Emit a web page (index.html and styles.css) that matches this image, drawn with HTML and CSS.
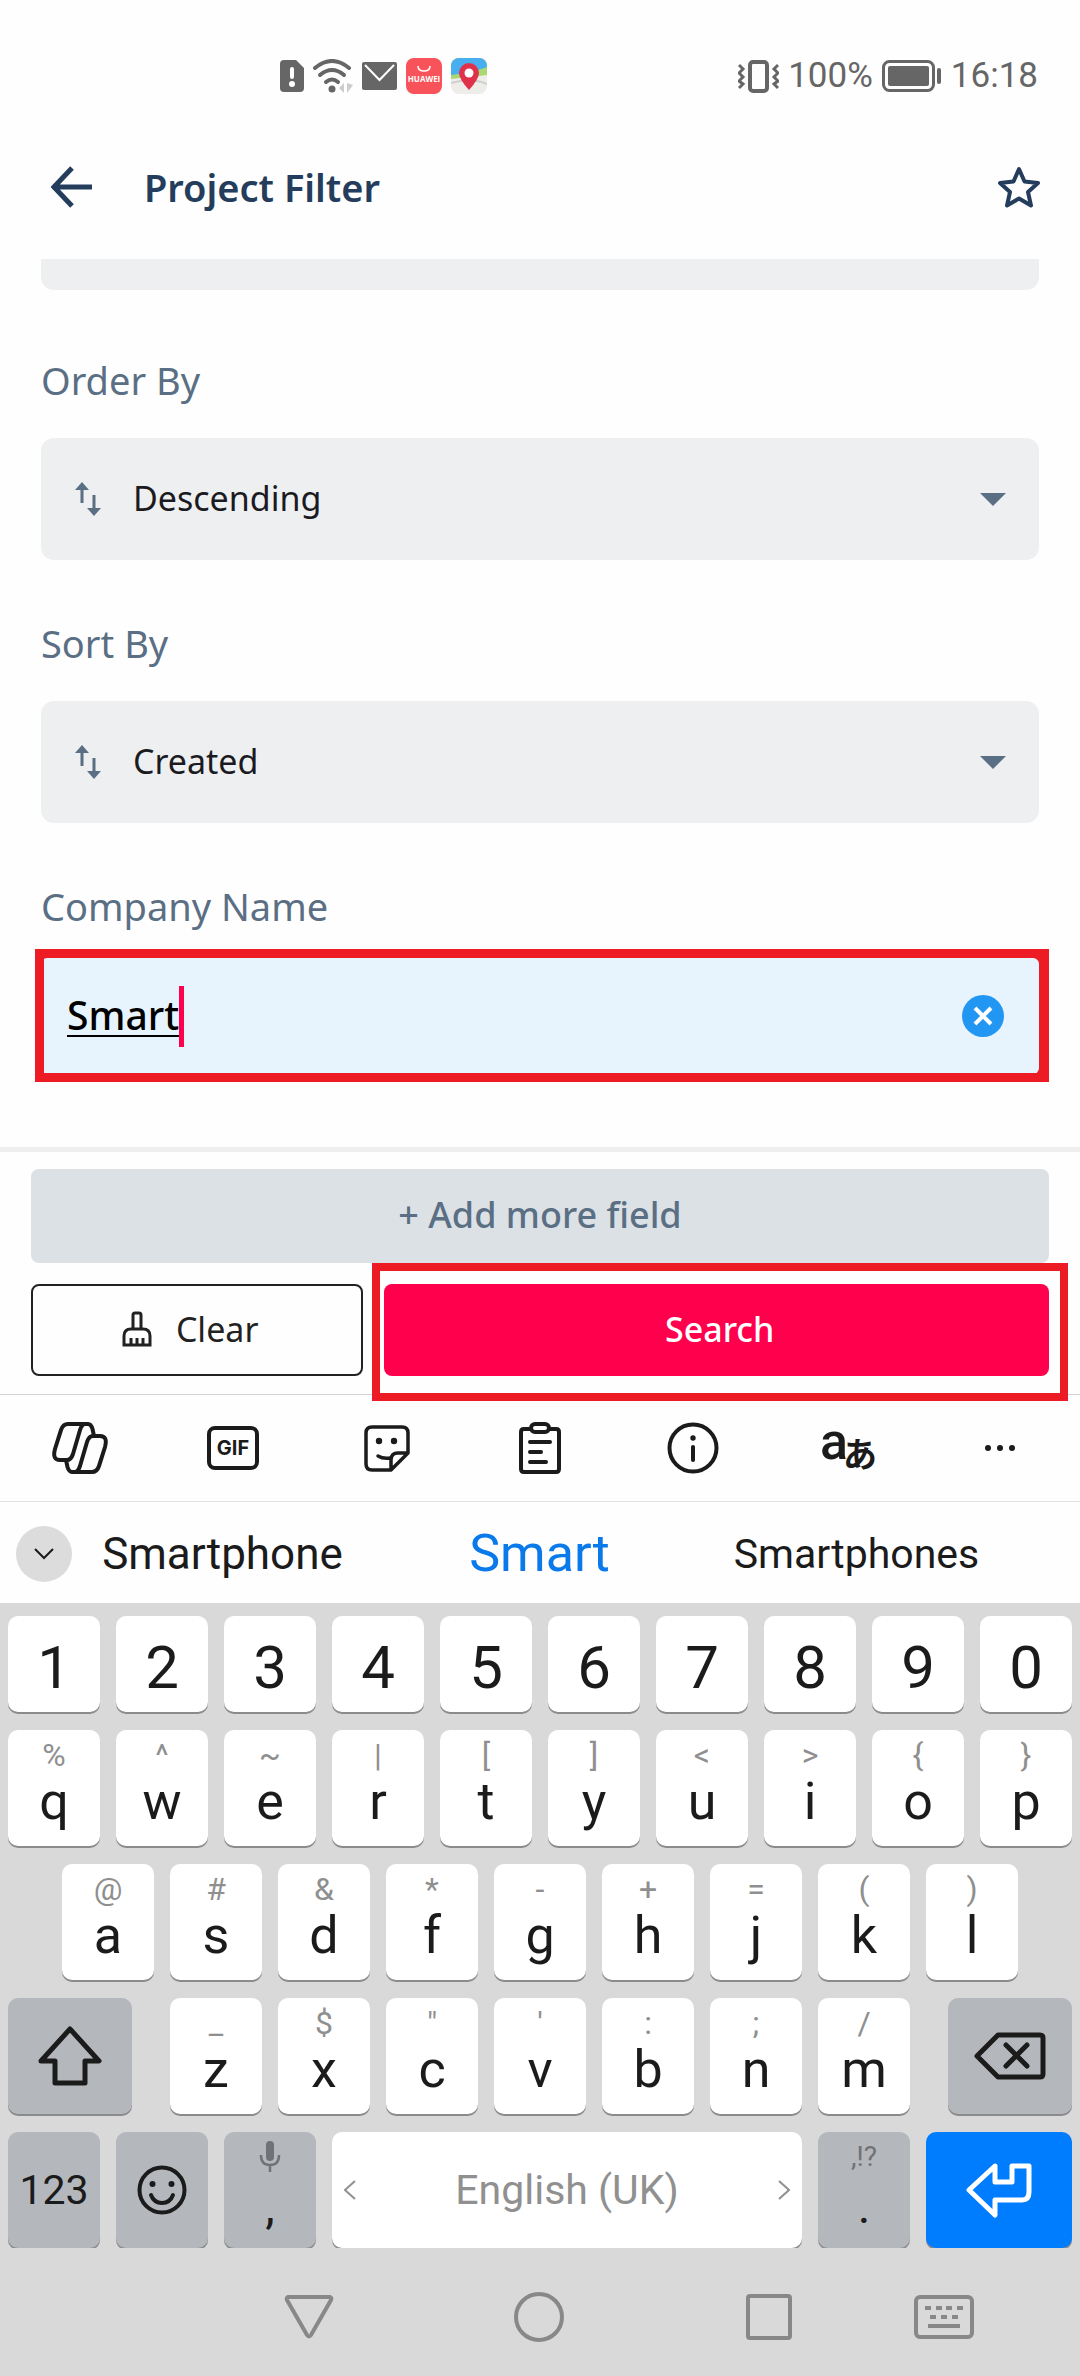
FILE: index.html
```html
<!DOCTYPE html>
<html lang="en">
<head>
<meta charset="utf-8">
<meta name="viewport" content="width=device-width, initial-scale=1">
<title>Project Filter</title>
<link rel="stylesheet" href="styles.css">
</head>
<body>
<div class="status">
  <div class="status-left">
    <svg width="24" height="32" viewBox="0 0 24 32"><path d="M4 0H16L24 8V28Q24 32 20 32H4Q0 32 0 28V4Q0 0 4 0Z" fill="#666"/><path d="M12 9V17" stroke="#fff" stroke-width="4" stroke-linecap="round"/><circle cx="12" cy="24" r="3" fill="#fff"/></svg>
    <svg width="40" height="34" viewBox="0 0 40 34"><g fill="none" stroke="#666" stroke-width="4" stroke-linecap="round"><path d="M2 9Q19 -5 36 9"/><path d="M7 16Q19 6 31 16"/><path d="M13 23Q19 18 25 23"/></g><circle cx="19" cy="30" r="3.500" fill="#666"/><path d="M31 24V34L26 29ZM34 24L40 26L34 34Z" fill="#ccc"/></svg>
    <svg width="35" height="28" viewBox="0 0 35 28"><rect width="35" height="28" rx="2" fill="#666"/><path d="M3 3L17.500 18L32 3" fill="none" stroke="#fff" stroke-width="2"/></svg>
    <svg width="36" height="36" viewBox="0 0 36 36"><rect width="36" height="36" rx="8" fill="#f8525a"/><path d="M12 8Q12 13 18 13Q24 13 24 8" fill="none" stroke="#fff" stroke-width="1.500"/><text x="18" y="24" text-anchor="middle" class="brand">HUAWEI</text></svg>
    <svg width="36" height="36" viewBox="0 0 36 36"><defs><clipPath id="m"><rect width="36" height="36" rx="8"/></clipPath></defs><g clip-path="url(#m)"><rect width="36" height="36" fill="#eeedea"/><path d="M0 0H36V17L0 21Z" fill="#a9d873"/><path d="M0 0H36V9Q24 14 0 17Z" fill="#48aef0"/><path d="M0 25Q20 19 36 26" stroke="#cfcfcf" fill="none" stroke-width="2"/></g><path d="M18 32Q8 21 8 15A10 10 0 0 1 28 15Q28 21 18 32Z" fill="#e0314a"/><circle cx="18" cy="15" r="4.500" fill="#fff"/></svg>
  </div>
  <div class="status-right">
    <svg width="41" height="33" viewBox="0 0 41 33" fill="none" stroke="#666" stroke-width="3"><rect x="12" y="2" width="17" height="29" rx="3" stroke-width="4"/><path d="M1 5L5 9L1 13L5 17L1 21L5 24L1 28M40 5L36 9L40 13L36 17L40 21L36 24L40 28"/></svg>
    <span>100%</span>
    <svg width="60" height="32" viewBox="0 0 60 32"><rect x="1.500" y="1.500" width="50" height="29" rx="6" fill="none" stroke="#666" stroke-width="3"/><rect x="6" y="6" width="41" height="20" rx="2" fill="#666"/><path d="M57 10V22" stroke="#666" stroke-width="4" stroke-linecap="round"/></svg>
    <span>16:18</span>
  </div>
</div>
<header class="header">
  <button class="bare" aria-label="Back"><svg width="42" height="42" viewBox="0 0 42 42" fill="none" stroke="#243d5c" stroke-width="5"><path d="M21 2L3 21L21 40M3 21H41"/></svg></button>
  <h1>Project Filter</h1>
  <button class="bare" aria-label="Favourite"><svg width="46" height="44" viewBox="0 0 46 44"><path d="M23 4L28.500 16.500L42 18L32 27L35 40.500L23 33.500L11 40.500L14 27L4 18L17.500 16.500Z" fill="none" stroke="#243d5c" stroke-width="4" stroke-linejoin="round"/></svg></button>
</header>
<main class="form">
  <div class="cut"></div>
  <div class="group">
    <label for="order">Order By</label>
    <div class="pick">
      <svg class="sort" width="28" height="34" viewBox="0 0 28 34"><path d="M8 0L15 8H1ZM6.500 7H9.500V21H6.500ZM18.500 13H21.500V27H18.500ZM20 34L13 26H27Z" fill="#5a6f84"/></svg>
      <select id="order"><option>Descending</option></select>
      <svg width="26" height="13" viewBox="0 0 26 13"><path d="M0 0H26L13 13Z" fill="#5a6f84"/></svg>
    </div>
  </div>
  <div class="group">
    <label for="sort">Sort By</label>
    <div class="pick">
      <svg class="sort" width="28" height="34" viewBox="0 0 28 34"><path d="M8 0L15 8H1ZM6.500 7H9.500V21H6.500ZM18.500 13H21.500V27H18.500ZM20 34L13 26H27Z" fill="#5a6f84"/></svg>
      <select id="sort"><option>Created</option></select>
      <svg width="26" height="13" viewBox="0 0 26 13"><path d="M0 0H26L13 13Z" fill="#5a6f84"/></svg>
    </div>
  </div>
  <div class="group company">
    <label for="company">Company Name</label>
    <div class="entry marked">
      <input id="company" type="text" value="Smart" size="5">
      <span class="caret"></span>
      <button class="bare end" aria-label="Clear text"><svg width="42" height="42" viewBox="0 0 42 42"><circle cx="21" cy="21" r="21" fill="#2196f3"/><path d="M13 13L29 29M29 13L13 29" stroke="#fff" stroke-width="4"/></svg></button>
    </div>
  </div>
</main>
<footer class="actions">
  <button class="add">+ Add more field</button>
  <div class="pair">
    <button class="clear"><svg width="30" height="36" viewBox="0 0 30 36" fill="none" stroke="#222" stroke-width="3"><path d="M11 17V4Q11 2 13 2H17Q19 2 19 4V17M2 34V25Q2 18 9 18H21Q28 18 28 25V34ZM9 34V27M15 34V27M21 34V27"/></svg>Clear</button>
    <div class="search-wrap marked"><button class="search">Search</button></div>
  </div>
</footer>
<section class="keyboard" aria-label="Keyboard">
  <div class="tools">
    <button class="bare" aria-label="Copilot"><svg width="56" height="52" viewBox="0 0 56 52" fill="none" stroke="#1b1b1b" stroke-width="4" stroke-linejoin="round"><path d="M33 2H16Q11 2 9 8L3 27Q0 38 8 38H15Q19 38 21 32L28 8Q30 2 33 2H36Q39 2 40.500 7L42 14"/><path transform="rotate(180 28 26)" d="M33 2H16Q11 2 9 8L3 27Q0 38 8 38H15Q19 38 21 32L28 8Q30 2 33 2H36Q39 2 40.500 7L42 14"/></svg></button>
    <button class="bare" aria-label="GIF"><svg width="52" height="44" viewBox="0 0 52 44"><rect x="2" y="2" width="48" height="40" rx="6" fill="none" stroke="#1b1b1b" stroke-width="4"/><text x="26" y="29" text-anchor="middle" class="gif">GIF</text></svg></button>
    <button class="bare" aria-label="Stickers"><svg width="46" height="47" viewBox="0 0 46 47" fill="none" stroke="#1b1b1b" stroke-width="3.500" stroke-linejoin="round" stroke-linecap="round"><path d="M8 2H38Q44 2 44 8V28L27 45H8Q2 45 2 39V8Q2 2 8 2ZM27 45V35Q27 28 34 28H44M14 31Q19 34 26 33"/><g fill="#1b1b1b" stroke="none"><circle cx="15" cy="16" r="3.200"/><circle cx="30" cy="16" r="3.200"/></g></svg></button>
    <button class="bare" aria-label="Clipboard"><svg width="42" height="52" viewBox="0 0 42 52" fill="none" stroke="#1b1b1b" stroke-width="4" stroke-linecap="round"><path d="M12 7H5Q2 7 2 10V47Q2 50 5 50H37Q40 50 40 47V10Q40 7 37 7H30"/><rect x="12" y="2" width="18" height="8" rx="4"/><path d="M11 20H31M11 30H22M11 40H27"/></svg></button>
    <button class="bare" aria-label="Info"><svg width="52" height="52" viewBox="0 0 52 52"><circle cx="26" cy="26" r="23.500" fill="none" stroke="#1b1b1b" stroke-width="4"/><path d="M26 25V38" stroke="#1b1b1b" stroke-width="4" stroke-linecap="round"/><circle cx="26" cy="16" r="2.700" fill="#1b1b1b"/></svg></button>
    <button class="bare" aria-label="Language"><svg width="66" height="76" viewBox="0 0 66 76"><text x="6" y="49" class="lang-a">a</text><text x="29" y="57" class="lang-b">あ</text></svg></button>
    <button class="bare" aria-label="More"><svg width="32" height="8" viewBox="0 0 32 8" fill="#1b1b1b"><circle cx="4" cy="4" r="3"/><circle cx="16" cy="4" r="3"/><circle cx="28" cy="4" r="3"/></svg></button>
  </div>
  <div class="suggest">
    <button class="fold" aria-label="Collapse"><svg width="20" height="12" viewBox="0 0 20 12"><path d="M1 1L10 10L19 1" fill="none" stroke="#1b1b1b" stroke-width="2"/></svg></button>
    <button>Smartphone</button><button class="best">Smart</button><button class="less">Smartphones</button>
  </div>
  <div class="keys">
    <div class="row digits"><button>1</button><button>2</button><button>3</button><button>4</button><button>5</button><button>6</button><button>7</button><button>8</button><button>9</button><button>0</button></div>
    <div class="row"><button><small>%</small>q</button><button><small>^</small>w</button><button><small>~</small>e</button><button><small>|</small>r</button><button><small>[</small>t</button><button><small>]</small>y</button><button><small>&lt;</small>u</button><button><small>&gt;</small>i</button><button><small>{</small>o</button><button><small>}</small>p</button></div>
    <div class="row inset"><button><small>@</small>a</button><button><small>#</small>s</button><button><small>&amp;</small>d</button><button><small>*</small>f</button><button><small>-</small>g</button><button><small>+</small>h</button><button><small>=</small>j</button><button><small>(</small>k</button><button><small>)</small>l</button></div>
    <div class="row shifted">
      <button class="fn icon" aria-label="Shift"><svg width="64" height="60" viewBox="0 0 64 60"><path d="M32 3L61 35H47V57H17V35H3Z" fill="none" stroke="#1b1b1b" stroke-width="5" stroke-linejoin="round"/></svg></button>
      <div class="row letters"><button><small>_</small>z</button><button><small>$</small>x</button><button><small>"</small>c</button><button><small>'</small>v</button><button><small>:</small>b</button><button><small>;</small>n</button><button><small>/</small>m</button></div>
      <button class="fn icon" aria-label="Backspace"><svg width="72" height="48" viewBox="0 0 72 48" fill="none" stroke="#1b1b1b" stroke-width="5" stroke-linecap="round" stroke-linejoin="round"><path d="M24 3H66Q69 3 69 6V42Q69 45 66 45H24L3 24ZM32 13L53 34M53 13L32 34"/></svg></button>
    </div>
    <div class="row bottom">
      <button class="fn icon num">123</button>
      <button class="fn icon" aria-label="Emoji"><svg width="50" height="50" viewBox="0 0 50 50"><circle cx="25" cy="25" r="22.500" fill="none" stroke="#1b1b1b" stroke-width="4"/><circle cx="15.500" cy="19" r="3" fill="#1b1b1b"/><circle cx="34.500" cy="19" r="3" fill="#1b1b1b"/><path d="M14 30Q17 38 25 38Q33 38 36 30" fill="none" stroke="#1b1b1b" stroke-width="4" stroke-linecap="round"/></svg></button>
      <button class="fn punct"><small><svg width="22" height="32" viewBox="0 0 22 32"><rect x="7" y="0" width="8" height="20" rx="4" fill="#707276"/><path d="M2 14Q2 24 11 24Q20 24 20 14M11 24V31" fill="none" stroke="#707276" stroke-width="2.500"/></svg></small>,</button>
      <button class="icon space"><svg width="12" height="20" viewBox="0 0 12 20"><path d="M11 1L1 10L11 19" fill="none" stroke="#909090" stroke-width="2"/></svg>English (UK)<svg width="12" height="20" viewBox="0 0 12 20"><path d="M1 1L11 10L1 19" fill="none" stroke="#909090" stroke-width="2"/></svg></button>
      <button class="fn punct"><small>,!?</small>.</button>
      <button class="icon enter" aria-label="Enter"><svg width="68" height="56" viewBox="0 0 68 56"><path d="M30 4L4 28L30 53V38H57Q64 38 64 30V4H47V20H30Z" fill="none" stroke="#fff" stroke-width="5" stroke-linejoin="round"/></svg></button>
    </div>
  </div>
</section>
<nav class="nav">
  <button class="bare" aria-label="Back"><svg width="50" height="46" viewBox="0 0 50 46"><path d="M4 3H46Q48 4 47 6L27 41Q25 44 23 41L3 6Q2 4 4 3Z" fill="none" stroke="#888" stroke-width="4"/></svg></button>
  <button class="bare" aria-label="Home"><svg width="50" height="50" viewBox="0 0 50 50"><circle cx="25" cy="25" r="23" fill="none" stroke="#888" stroke-width="4"/></svg></button>
  <button class="bare" aria-label="Recent"><svg width="46" height="46" viewBox="0 0 46 46"><rect x="2" y="2" width="42" height="42" rx="2" fill="none" stroke="#888" stroke-width="4"/></svg></button>
  <button class="bare" aria-label="Switch keyboard"><svg width="60" height="44" viewBox="0 0 60 44"><rect x="2" y="2" width="56" height="40" rx="4" fill="none" stroke="#888" stroke-width="4"/><path d="M11 13H17M22 13H28M32 13H38M43 13H49M16 22H22M27 22H33M38 22H44M14 31H46" stroke="#888" stroke-width="4"/></svg></button>
</nav>
</body>
</html>
```
FILE: styles.css
```css
* { box-sizing: border-box; }
body { margin: 0; min-height: 100vh; display: flex; flex-direction: column; background: #fefefe; font-family: "Noto Sans", sans-serif; }
svg { display: block; flex: none; }
button, input, select { font: inherit; color: inherit; border: 0; margin: 0; padding: 0; background: none; }
.bare { display: flex; align-items: center; justify-content: center; }

.status { height: 150px; padding: 2px 42px 0 280px; display: flex; align-items: center; justify-content: space-between; font: 400 35px/40px Roboto, sans-serif; color: #666; }
.status-left { display: flex; align-items: center; gap: 9px; }
.status-right { display: flex; align-items: center; gap: 9px; }
.brand { font: 700 8px "Open Sans", sans-serif; fill: #fff; }

.header { height: 74px; margin-bottom: 35px; padding: 0 38px 0 51px; display: flex; align-items: center; color: #243d5c; }
.header h1 { flex: 1; margin: 0 0 0 51px; font-size: 38px; line-height: 48px; font-weight: 600; }

.form { padding: 0 41px 73px; border-bottom: 5px solid #eee; display: flex; flex-direction: column; gap: 59px; }
.cut { height: 31px; margin-bottom: 7px; border-radius: 0 0 13px 13px; background: #eeeff1; }
.group { display: flex; flex-direction: column; gap: 34px; }
.company { gap: 28px; }
.group label { font-size: 38px; line-height: 48px; color: #5a6f84; }
.pick { height: 122px; padding: 0 33px; border-radius: 13px; background: #eeeff1; display: flex; align-items: center; }
.pick select { flex: 1; height: 100%; margin-left: 31px; padding-bottom: 3px; appearance: none; font-size: 34px; color: #1b1b1f; }
.entry { height: 116px; padding: 0 35px 0 26px; border-radius: 6px; box-shadow: 0 0 0 4px #ed1c24; background: #e7f4fe; display: flex; align-items: center; }
.entry input { field-sizing: content; padding-bottom: 4px; outline: 0; font-size: 39px; font-weight: 500; color: #000; text-decoration: underline 2px; text-underline-offset: 5px; }
.caret { width: 5px; height: 61px; background: #ff004d; }
.end { margin-left: auto; }
.marked { position: relative; }
.marked::after { content: ""; position: absolute; border: 9px solid #ed1c24; pointer-events: none; }
.entry::after { inset: -9px -10px -8px -6px; }

.actions { padding: 17px 31px 18px; display: flex; flex-direction: column; gap: 21px; }
.add { height: 94px; padding-bottom: 3px; border-radius: 8px; background: #dce1e5; color: #5a6f84; font-size: 36px; font-weight: 500; }
.pair { display: grid; grid-template-columns: 1fr 2fr; gap: 21px; height: 92px; }
.clear { padding: 0 14px 2px 0; border: 2px solid #222; border-radius: 8px; display: flex; align-items: center; justify-content: center; gap: 24px; font-size: 34px; color: #222; }
.search-wrap { display: grid; }
.search { padding: 0 0 2px 6px; border-radius: 8px; background: #ff004d; color: #fff; font-size: 34px; font-weight: 500; }
.search-wrap::after { inset: -21px -19px -25px -12px; border-width: 8px; }

.keyboard { font-family: Roboto, sans-serif; color: #1b1b1b; border-top: 1px solid #d4d4d4; }
.tools { height: 107px; padding: 0 3px; display: grid; grid-template-columns: repeat(7, 1fr); border-bottom: 1px solid #e2e2e2; }
.gif { font: 700 20px Inter, sans-serif; fill: #1b1b1b; }
.lang-a { font: 500 52px Roboto, sans-serif; fill: #1b1b1b; }
.lang-b { font: 700 34px "Noto Sans CJK JP", sans-serif; fill: #1b1b1b; }
.suggest { height: 101px; padding: 2px 65px 0 64px; display: grid; grid-template-columns: repeat(3, 1fr); align-items: center; position: relative; font-size: 44px; line-height: 60px; }
.best { font-size: 52px; color: #0a7aeb; }
.less { font-size: 41px; }
.fold { position: absolute; left: 16px; top: 24px; width: 56px; height: 56px; border-radius: 50%; background: #dcdcdc; display: flex; align-items: center; justify-content: center; }

.keys { padding: 13px 8px 0; background: #d9d9d9; display: flex; flex-direction: column; gap: 18px; }
.row { display: grid; grid-auto-flow: column; grid-auto-columns: 1fr; gap: 16px; }
.row button { height: 116px; border-radius: 10px; background: #fff; box-shadow: 0 2px #8b8b8d; font-size: 52px; line-height: 44px; display: flex; flex-direction: column; align-items: center; }
.row small { height: 50px; font-size: 32px; line-height: 50px; color: #8f8f8f; }
.digits button { height: 96px; justify-content: center; padding-top: 7px; font-size: 60px; }
.row.inset { padding: 0 54px; }
.row.shifted { grid-auto-columns: auto; grid-template-columns: 124fr 740fr 124fr; gap: 38px; }
.row.bottom { grid-template-columns: 92fr 92fr 92fr 470fr 92fr 146fr; }
.row .fn { background: #b4b8bd; }
.row .icon { flex-direction: row; justify-content: center; font-size: 41px; }
.row .space { justify-content: space-between; padding: 0 12px; color: #909090; }
.row .enter { background: #007cff; }
.row .punct { font-size: 48px; line-height: 50px; }
.row .punct small { font-size: 28px; color: #707276; display: flex; align-items: center; }

.nav { flex: 1; min-height: 127px; padding: 10px 76px 0 194px; background: #d9d9d9; display: grid; grid-template-columns: 1fr 1fr 1fr 120px; align-items: center; }
```
